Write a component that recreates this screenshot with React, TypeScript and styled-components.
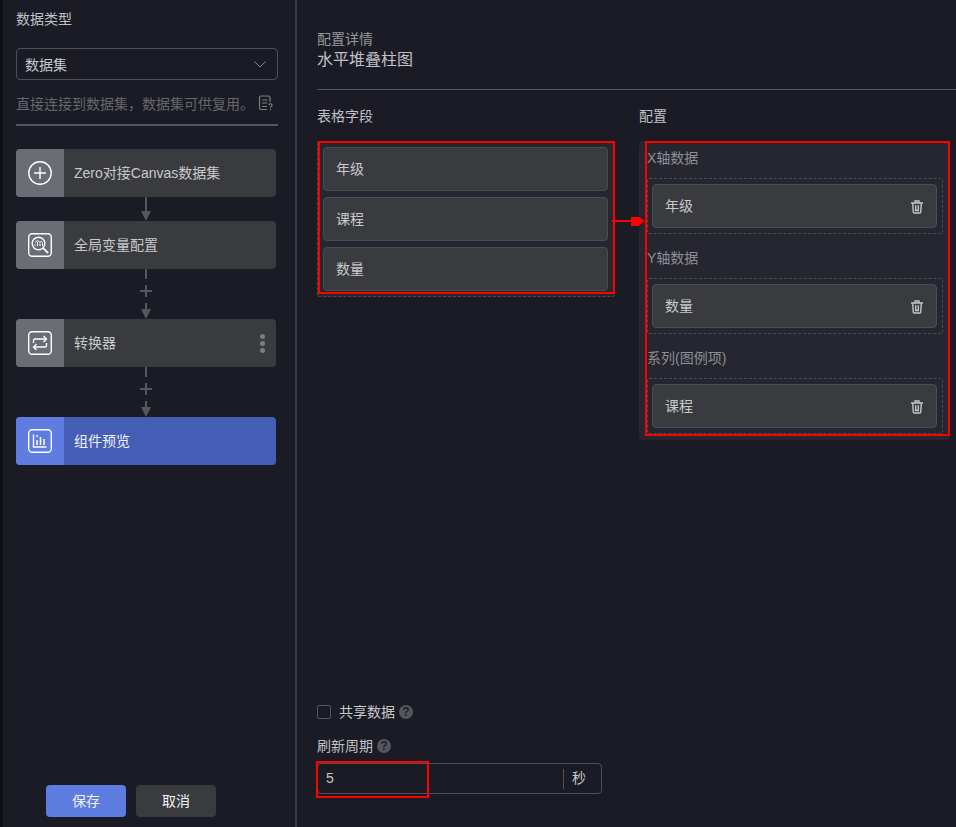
import React from "react";
import styled, { createGlobalStyle } from "styled-components";

const GlobalStyle = createGlobalStyle`
  html, body {
    margin: 0;
    padding: 0;
    background: #1a1b24;
  }
  body {
    font-family: "Liberation Sans", "Noto Sans CJK SC", sans-serif;
    font-size: 14px;
    color: #c8c9cc;
  }
  * { box-sizing: border-box; }
`;

const Page = styled.div`
  display: flex;
  width: 956px;
  height: 827px;
  overflow: hidden;
  background: #1a1b24;
`;

const Strip = styled.div`
  width: 3px;
  flex: none;
  background: #101114;
`;

const Sidebar = styled.aside`
  width: 294px;
  flex: none;
  display: flex;
  flex-direction: column;
  padding: 9px 17px 10px 13px;
  border-right: 2px solid #3a3b40;
`;

const SideTitle = styled.div`
  height: 20px;
  line-height: 20px;
  color: #c0c1c5;
`;

const Select = styled.div`
  display: flex;
  align-items: center;
  justify-content: space-between;
  height: 32px;
  margin-top: 19px;
  padding: 0 10px 1px 8px;
  border: 1px solid #4f5057;
  border-radius: 4px;
  color: #c8c9cc;
`;

const Hint = styled.div`
  display: flex;
  align-items: center;
  justify-content: space-between;
  height: 24px;
  margin-top: 11px;
  padding-right: 5px;
  color: #66676d;
`;

const Rule = styled.div`
  height: 2px;
  margin-top: 9px;
  background: #55565c;
`;

const Flow = styled.div`
  display: flex;
  flex-direction: column;
  width: 260px;
  margin-top: 23px;
`;

const Node = styled.div<{ $active?: boolean }>`
  display: flex;
  align-items: center;
  height: 48px;
  border-radius: 4px;
  overflow: hidden;
  background: ${(p) => (p.$active ? "#465db5" : "#3a3b3f")};
  color: ${(p) => (p.$active ? "#f2f3f7" : "#c8c9cc")};
`;

const NodeIcon = styled.div<{ $active?: boolean }>`
  display: flex;
  align-items: center;
  justify-content: center;
  width: 48px;
  height: 48px;
  flex: none;
  background: ${(p) => (p.$active ? "#5f7de0" : "#6b6d75")};
`;

const NodeLabel = styled.div`
  flex: 1;
  padding: 0 0 2px 10px;
`;

const NodeMenu = styled.div`
  display: flex;
  flex-direction: column;
  gap: 2px;
  margin-right: 11px;
`;

const MenuDot = styled.span`
  width: 5px;
  height: 5px;
  border-radius: 50%;
  background: #7b7c85;
`;

const Connector = styled.div`
  display: flex;
  flex-direction: column;
  align-items: center;
`;

const Stem = styled.div<{ $h: number }>`
  width: 2px;
  height: ${(p) => p.$h}px;
  background: #56575d;
`;

const ArrowHead = styled.div`
  width: 0;
  height: 0;
  border-left: 5px solid transparent;
  border-right: 5px solid transparent;
  border-top: 10px solid #56575d;
`;

const PlusMark = styled.div`
  display: flex;
  height: 12px;
  margin: 6px 0;
`;

const Footer = styled.div`
  display: flex;
  gap: 10px;
  margin-top: auto;
  padding-left: 30px;
`;

const Button = styled.button<{ $primary?: boolean }>`
  width: 80px;
  height: 32px;
  padding: 0 0 2px;
  border: 0;
  border-radius: 4px;
  font: inherit;
  color: #f0f1f4;
  background: ${(p) => (p.$primary ? "#5c7ce0" : "#3a3b3f")};
`;

const Main = styled.main`
  flex: 1;
  min-width: 0;
  display: flex;
  flex-direction: column;
  padding: 29px 0 33px 20px;
`;

const Crumb = styled.div`
  height: 20px;
  line-height: 20px;
  color: #96979c;
`;

const ChartName = styled.div`
  height: 22px;
  line-height: 22px;
  font-size: 16px;
  color: #c0c1c5;
`;

const MainRule = styled.div`
  height: 1px;
  margin-top: 18px;
  background: #55565c;
`;

const Columns = styled.div`
  display: flex;
  margin-top: 16px;
`;

const FieldColumn = styled.section`
  width: 322px;
  flex: none;
`;

const ConfigColumn = styled.section`
  flex: 1;
  min-width: 0;
`;

const ColumnTitle = styled.div`
  height: 20px;
  line-height: 20px;
  color: #c0c1c5;
`;

const FieldTray = styled.div`
  position: relative;
  display: flex;
  flex-direction: column;
  gap: 6px;
  width: 298px;
  margin-top: 15px;
  padding: 6px 6px 5px 5px;
  background: #25262f;
  border: 1px dashed #4a4b53;
  border-top: 0;
  border-radius: 2px;
`;

const Chip = styled.div`
  display: flex;
  align-items: center;
  justify-content: space-between;
  height: 44px;
  padding: 0 12px 2px;
  border: 1px solid #4b4c53;
  border-radius: 4px;
  background: #3a3b3f;
  color: #c8c9cc;
`;

const RedFrame = styled.div`
  position: absolute;
  border: 2px solid #ff0000;
  pointer-events: none;
`;

const FieldFrame = styled(RedFrame)`
  left: 0;
  top: 0;
  width: 297px;
  height: 153px;
`;

const RedArrow = styled.div`
  position: absolute;
  z-index: 1;
  left: 294px;
  top: 75px;
  display: flex;
  align-items: center;
  width: 33px;
  height: 10px;
`;

const RedLine = styled.div`
  flex: 1;
  height: 2px;
  background: #ff0000;
`;

const RedBlock = styled.div`
  flex: none;
  width: 8px;
  height: 9px;
  background: #ff0000;
`;

const RedHead = styled.div`
  flex: none;
  width: 0;
  height: 0;
  border-top: 4px solid transparent;
  border-bottom: 4px solid transparent;
  border-left: 6px solid #ff0000;
`;

const ConfigPanel = styled.div`
  position: relative;
  width: 311px;
  height: 299px;
  margin-top: 15px;
  padding: 7px 7px 0 8px;
  background: #25262f;
  border-radius: 4px;
`;

const ConfigFrame = styled(RedFrame)`
  left: 6px;
  top: 0;
  width: 305px;
  height: 295px;
`;

const SlotGroup = styled.div`
  margin-bottom: 14px;
`;

const SlotLabel = styled.div`
  height: 20px;
  line-height: 20px;
  color: #8e8f94;
`;

const Slot = styled.div`
  margin-top: 10px;
  height: 56px;
  padding: 5px 5px 5px 4px;
  border: 1px dashed #4a4b53;
  border-radius: 2px;
`;

const TrashGlyph = styled.svg`
  flex: none;
  margin-top: 3px;
`;

const Spacer = styled.div`
  flex: 1;
`;

const CheckRow = styled.div`
  display: flex;
  align-items: center;
  height: 20px;
`;

const Checkbox = styled.span`
  width: 14px;
  height: 14px;
  margin-right: 8px;
  border: 1px solid #56575e;
  border-radius: 2px;
`;

const FieldText = styled.span`
  padding-bottom: 2px;
`;

const Help = styled.span`
  display: inline-flex;
  align-items: center;
  justify-content: center;
  width: 14px;
  height: 14px;
  margin-left: 4px;
  border-radius: 50%;
  background: #55565c;
  color: #1f2028;
  font-size: 12px;
  font-weight: 700;
`;

const RefreshLabel = styled.div`
  display: flex;
  align-items: center;
  height: 20px;
  margin-top: 14px;
  color: #c0c1c5;
`;

const Period = styled.div`
  position: relative;
  display: flex;
  align-items: center;
  width: 285px;
  height: 31px;
  margin-top: 7px;
  padding: 0 15px 0 8px;
  border: 1px solid #4f5057;
  border-radius: 4px;
`;

const PeriodValue = styled.div`
  flex: 1;
  padding-bottom: 2px;
  color: #c8c9cc;
`;

const PeriodUnit = styled.div`
  height: 20px;
  line-height: 19px;
  padding-left: 8px;
  border-left: 1px solid #4f5057;
  color: #c8c9cc;
`;

const PeriodFrame = styled(RedFrame)`
  left: -2px;
  top: -3px;
  width: 113px;
  height: 37px;
`;

const Chevron = () => (
  <svg width="14" height="14" viewBox="0 0 14 14" fill="none" stroke="#85868c" strokeWidth="1">
    <path d="M1.5 4.5 7 10l5.5-5.5" />
  </svg>
);

const DocHelp = () => (
  <svg width="15" height="16" viewBox="0 0 15 16" fill="none" stroke="#7c7d83" strokeWidth="1.2">
    <path d="M12 7V2.500A1.500 1.500 0 0 0 10.500 1H3A1.500 1.500 0 0 0 1.500 2.500v10.500A1.500 1.500 0 0 0 3 14.500h6" />
    <path d="M4 5h5.500M4 8h5.500M4 11.500h5" />
    <path d="M11 10.200a1.500 1.500 0 1 1 2.300 1.300c-.6.400-.8.600-.8 1.200M12.500 14v1.200" />
  </svg>
);

const PlusCircle = () => (
  <svg width="24" height="24" viewBox="0 0 24 24" fill="none" stroke="#fff" strokeWidth="1.4">
    <circle cx="12" cy="12" r="11.2" />
    <path d="M12 6v12M6 12h12" />
  </svg>
);

const VariableIcon = () => (
  <svg width="24" height="24" viewBox="0 0 24 24" fill="none" stroke="#fff" strokeWidth="1.4">
    <rect x=".7" y=".7" width="22.600" height="22.600" rx="3.500" />
    <circle cx="10.500" cy="10.500" r="6.300" />
    <path d="m15.200 15.200 4.800 4.800" strokeWidth="1.800" />
    <path d="M7 13v-1.500M9.500 13V9M12 13v-2.500M14.500 13V9.500M7 9.500l2.500-2 2.500 2 2-1.500" strokeWidth="1" />
  </svg>
);

const SwapIcon = () => (
  <svg width="24" height="24" viewBox="0 0 24 24" fill="none" stroke="#fff" strokeWidth="1.4">
    <rect x=".7" y=".7" width="22.600" height="22.600" rx="3.500" />
    <path d="M5.500 12V9.500A1.500 1.500 0 0 1 7 8h11M15.500 5 18.500 8l-3 3" />
    <path d="M18.500 12v2.500A1.500 1.500 0 0 1 17 16H6M8.500 13 5.500 16l3 3" />
  </svg>
);

const ChartIcon = () => (
  <svg width="24" height="24" viewBox="0 0 24 24" fill="none" stroke="#fff" strokeWidth="1.4">
    <rect x=".7" y=".7" width="22.600" height="22.600" rx="3.500" />
    <path d="M5.500 5.500v12.500h13" />
    <path d="M9 16v-5M12.500 16V8M16 16v-6M8 7h2" strokeWidth="1.500" />
  </svg>
);

const Trash = () => (
  <TrashGlyph width="14" height="14" viewBox="0 0 14 14" fill="none" stroke="#c4c5ca" strokeWidth="1.400">
    <path d="M1 3h12M5 2.700V1h4v1.700" />
    <path d="M2.700 3l.6 9.200a.9.9 0 0 0 .9.800h5.600a.9.900 0 0 0 .9-.8L11.300 3" />
    <path d="M5.700 5.200v5.300h2.600V5.200" />
  </TrashGlyph>
);

const Plus = () => (
  <svg width="12" height="12" viewBox="0 0 12 12" fill="none" stroke="#56575d" strokeWidth="2">
    <path d="M6 0v12M0 6h12" />
  </svg>
);

const PlainLink = () => (
  <Connector>
    <Stem $h={14} />
    <ArrowHead />
  </Connector>
);

const PlusLink = () => (
  <Connector>
    <Stem $h={10} />
    <PlusMark>
      <Plus />
    </PlusMark>
    <Stem $h={6} />
    <ArrowHead />
  </Connector>
);

const slots = [
  { label: "X轴数据", value: "年级" },
  { label: "Y轴数据", value: "数量" },
  { label: "系列(图例项)", value: "课程" },
];

export default function App() {
  return (
    <Page>
      <GlobalStyle />
      <Strip />
      <Sidebar>
        <SideTitle>数据类型</SideTitle>
        <Select>
          数据集
          <Chevron />
        </Select>
        <Hint>
          直接连接到数据集，数据集可供复用。
          <DocHelp />
        </Hint>
        <Rule />
        <Flow>
          <Node>
            <NodeIcon>
              <PlusCircle />
            </NodeIcon>
            <NodeLabel>Zero对接Canvas数据集</NodeLabel>
          </Node>
          <PlainLink />
          <Node>
            <NodeIcon>
              <VariableIcon />
            </NodeIcon>
            <NodeLabel>全局变量配置</NodeLabel>
          </Node>
          <PlusLink />
          <Node>
            <NodeIcon>
              <SwapIcon />
            </NodeIcon>
            <NodeLabel>转换器</NodeLabel>
            <NodeMenu>
              <MenuDot />
              <MenuDot />
              <MenuDot />
            </NodeMenu>
          </Node>
          <PlusLink />
          <Node $active>
            <NodeIcon $active>
              <ChartIcon />
            </NodeIcon>
            <NodeLabel>组件预览</NodeLabel>
          </Node>
        </Flow>
        <Footer>
          <Button $primary>保存</Button>
          <Button>取消</Button>
        </Footer>
      </Sidebar>
      <Main>
        <Crumb>配置详情</Crumb>
        <ChartName>水平堆叠柱图</ChartName>
        <MainRule />
        <Columns>
          <FieldColumn>
            <ColumnTitle>表格字段</ColumnTitle>
            <FieldTray>
              <Chip>年级</Chip>
              <Chip>课程</Chip>
              <Chip>数量</Chip>
              <FieldFrame />
              <RedArrow>
                <RedLine />
                <RedBlock />
                <RedHead />
              </RedArrow>
            </FieldTray>
          </FieldColumn>
          <ConfigColumn>
            <ColumnTitle>配置</ColumnTitle>
            <ConfigPanel>
              {slots.map((slot) => (
                <SlotGroup key={slot.label}>
                  <SlotLabel>{slot.label}</SlotLabel>
                  <Slot>
                    <Chip>
                      {slot.value}
                      <Trash />
                    </Chip>
                  </Slot>
                </SlotGroup>
              ))}
              <ConfigFrame />
            </ConfigPanel>
          </ConfigColumn>
        </Columns>
        <Spacer />
        <CheckRow>
          <Checkbox />
          <FieldText>共享数据</FieldText>
          <Help>?</Help>
        </CheckRow>
        <RefreshLabel>
          <FieldText>刷新周期</FieldText>
          <Help>?</Help>
        </RefreshLabel>
        <Period>
          <PeriodValue>5</PeriodValue>
          <PeriodUnit>秒</PeriodUnit>
          <PeriodFrame />
        </Period>
      </Main>
    </Page>
  );
}
